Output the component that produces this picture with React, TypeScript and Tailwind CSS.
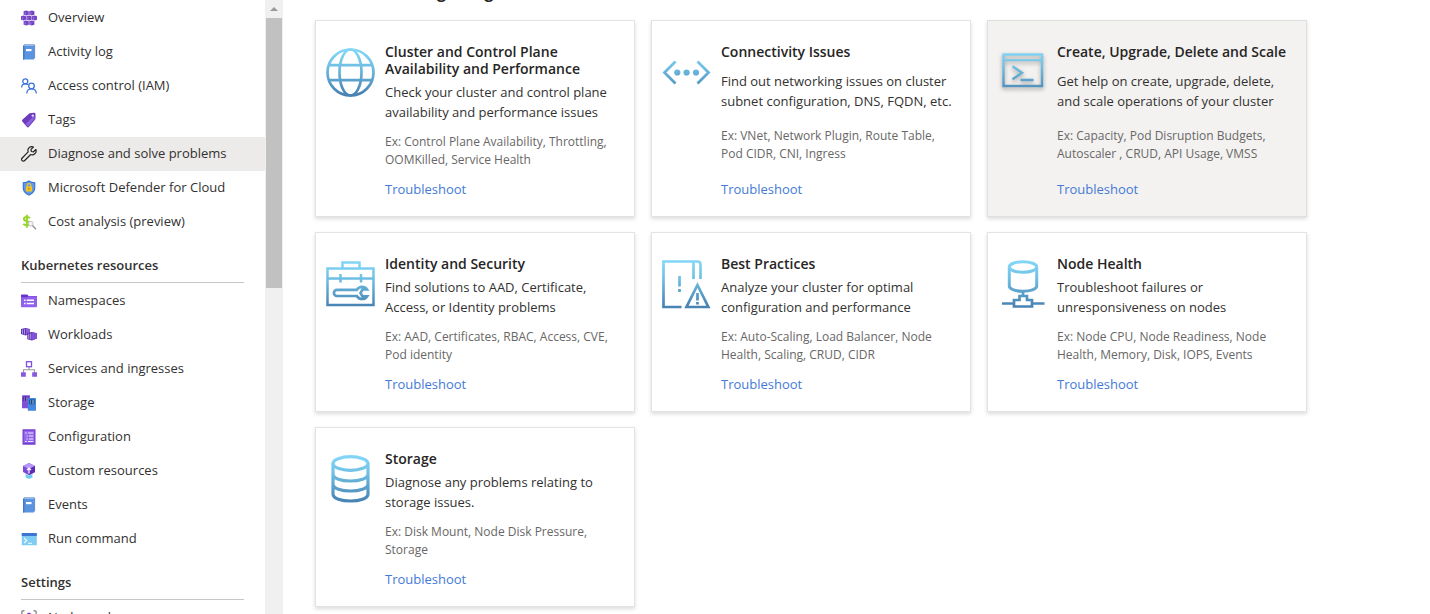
import type { ReactNode } from "react";

type NavItem = { label: string; icon: ReactNode; active?: boolean };
type CardData = { title: string; body: string; examples: string; icon: ReactNode; highlighted?: boolean };

function SmallIcon({ children }: { children: ReactNode }) {
  return (
    <svg aria-hidden="true" viewBox="0 0 16 16" className="size-4 shrink-0" fill="none">
      {children}
    </svg>
  );
}

function LargeIcon({ id, shadow, children }: { id: string; shadow?: boolean; children: ReactNode }) {
  return (
    <svg
      aria-hidden="true"
      viewBox="0 0 50 50"
      className={shadow ? "size-[50px] shrink-0 drop-shadow-[0_2px_2px_rgba(0,0,0,0.35)]" : "size-[50px] shrink-0"}
      fill="none"
      stroke={`url(#${id})`}
      strokeWidth="2.7"
    >
      <defs>
        <linearGradient id={id} gradientUnits="userSpaceOnUse" x1="0" y1="3" x2="0" y2="46">
          <stop offset="0" stopColor="#82d5f7" />
          <stop offset="0.35" stopColor="#6fc0e4" />
          <stop offset="1" stopColor="#4883b3" />
        </linearGradient>
      </defs>
      {children}
    </svg>
  );
}

function BookIcon() {
  return (
    <SmallIcon>
      <path d="M3 .9h10.600v13.600" stroke="#5b87c9" strokeWidth="1" />
      <path d="M2 2.200 3 1h10v1z" fill="#cfe0f7" />
      <rect x="2" y="1.500" width="11" height="14" fill="#5a93e0" />
      <path d="M2 1.500h1.400v14H2z" fill="#4479c6" />
      <rect x="5" y="5" width="5.500" height="2.200" fill="#fff" />
    </SmallIcon>
  );
}

const clusterIcon = (
  <SmallIcon>
    <g fill="#7444c4">
      <path d="m2.600 1.300 2.600-.8 2.600.8v3.400l-2.600.9-2.600-.9z" />
      <path d="m8.200 1.300 2.600-.8 2.600.8v3.400l-2.600.9-2.600-.9z" />
      <path d="M0 6.300l2.500-.8 2.500.8v3.400l-2.500.9L0 9.700z" />
      <path d="m5.400 6.300 2.600-.8 2.600.8v3.400l-2.600.9-2.600-.9z" />
      <path d="m11 6.300 2.500-.8 2.500.8v3.400l-2.500.9-2.500-.9z" />
      <path d="m2.600 11.300 2.600-.8 2.600.8v3.400l-2.600.9-2.600-.9z" />
      <path d="m8.200 11.300 2.600-.8 2.600.8v3.400l-2.600.9-2.600-.9z" />
    </g>
    <path d="M4.200 2.200v2.600M9.800 2.200v2.600M1.600 7.200v2.600M7 7.200v2.600M12.600 7.200v2.600M4.200 12.200v2.600M9.800 12.200v2.600" stroke="#9f78e2" strokeWidth="1" />
  </SmallIcon>
);

const peopleIcon = (
  <SmallIcon>
    <g stroke="#3f74dc" strokeWidth="1.300">
      <circle cx="4.300" cy="3.300" r="2.500" />
      <path d="M.7 9.500C.7 7 2.200 5.900 4.300 5.900c1.200 0 2.100.4 2.700 1" />
      <circle cx="10.500" cy="8" r="2.800" />
      <path d="M5.800 15.500c0-3 1.900-4.700 4.700-4.700s4.800 1.700 4.800 4.700" />
    </g>
  </SmallIcon>
);

const tagIcon = (
  <SmallIcon>
    <path d="M8.500 1.300 13 .8c1 0 1.500.5 1.500 1.500v4.200c0 .7-.2 1.100-.7 1.600l-6 6.900c-.6.600-1.200.600-1.800 0L1.300 9.500c-.500-.6-.5-1.100 0-1.700z" fill="#6d3cbd" />
    <path d="m13.500 3.500v3.500L7 14.500 4.500 12z" fill="#8c62dc" />
    <circle cx="11.800" cy="3.600" r="1.200" fill="#e6dafa" />
  </SmallIcon>
);

const wrenchIcon = (
  <SmallIcon>
    <path
      d="M14.900 3.500 12.500 5.800 10.300 5.500 10 3.400 12.400 1C10.700.3 8.900.700 7.900 1.900 6.900 3 6.700 4.500 7.200 5.900L1.200 12c-.8.800-.8 1.900-.1 2.600s1.900.7 2.600-.1l6-6c1.400.5 3 .2 4.100-.8 1.200-1.100 1.600-2.700 1.100-4.200z"
      stroke="#262524"
      strokeWidth="1.200"
      strokeLinejoin="round"
    />
  </SmallIcon>
);

const shieldIcon = (
  <SmallIcon>
    <path d="M8 .2c1.800 1.300 3.700 1.900 6.300 2v5.600c0 4-2.600 6.300-6.300 8-3.700-1.700-6.300-4-6.300-8V2.200C4.300 2.100 6.200 1.500 8 .2z" fill="#3d73d0" />
    <path d="M8 1.500c1.600 1 3.200 1.500 5.200 1.700v4.600c0 3.300-2.100 5.200-5.200 6.700-3.100-1.500-5.200-3.400-5.200-6.700V3.200C4.800 3 6.400 2.500 8 1.500z" fill="#619ae8" />
    <path d="M6.200 7V5.400C6.200 3 9.800 3 9.800 5.400V7" stroke="#f2c51e" strokeWidth="1.200" />
    <rect x="4.900" y="6.600" width="6.200" height="4.800" rx=".5" fill="#f2c51e" />
    <circle cx="8" cy="8.800" r=".8" fill="#a86c12" />
  </SmallIcon>
);

const costIcon = (
  <SmallIcon>
    <path d="M9 4.300C8.300 3.300 7.200 3 5.800 3 4 3 2.900 3.700 2.900 4.900c0 3 6.100 1.400 6.100 4.400 0 1.300-1.300 2-3 2-1.700 0-3-.5-3.700-1.600M5.900.8v12.900" stroke="#97d52c" strokeWidth="2" />
    <circle cx="9.700" cy="9.700" r="2.400" fill="#f3f3f3" stroke="#bcbcbc" strokeWidth=".9" />
    <path d="m11.500 11.500 3.500 3.700" stroke="#8e8e8e" strokeWidth="1.300" />
  </SmallIcon>
);

const namespaceIcon = (
  <SmallIcon>
    <path d="M0 2.300c0-.5.300-.8.800-.8h5.500L7.500 3H16v2H0z" fill="#6933c9" />
    <path d="M0 4.200h6.500l1-1H16v10.300c0 .5-.3.800-.8.800H.8c-.5 0-.8-.3-.8-.8z" fill="#9260ee" />
    <path d="M3 7.200h1.500M5.700 7.200H13M3 10.500h1.500M5.700 10.500H13" stroke="#fff" strokeWidth="1.600" />
  </SmallIcon>
);

const workloadIcon = (
  <SmallIcon>
    <path d="m0 2 4.500-1L9 2v5l-4.500 1.500L0 7z" fill="#5c36ac" />
    <path d="M1.500 2.500v4.300M3.500 2.200v5.200" stroke="#c4a9f5" strokeWidth=".8" />
    <path d="m5 1.500 4 .8v4.200L5 8z" fill="#8a5bdd" />
    <path d="m6.300 6 4.700-1 5 1.200v5.300L11 13.500l-4.700-1.200z" fill="#5529a4" />
    <path d="M11 5.200 16 6.500v5L11 13.300z" fill="#8250da" />
    <path d="M7.800 6.700v5.200M9.800 6.400v6" stroke="#cfb9f8" strokeWidth=".9" />
  </SmallIcon>
);

const servicesIcon = (
  <SmallIcon>
    <path d="M8 6v3M2.500 11.500V8.700h11v2.800" stroke="#9a9a9a" strokeWidth="1.100" />
    <rect x="5.500" y=".7" width="5" height="5" fill="#fff" stroke="#8250df" strokeWidth="1.300" />
    <path d="M0 11.300h4.800v4.500H0zM11.200 11.300H16v4.500h-4.800z" fill="#8658df" />
  </SmallIcon>
);

const storageIcon = (
  <SmallIcon>
    <rect x="1" y=".2" width="8" height="13" rx=".5" fill="#8050d7" />
    <rect x="2.300" y="1.500" width="5.400" height="4.500" fill="#4a2796" />
    <path d="M3 3h1M5 3h2.300M3 5h1M5 5h2.300" stroke="#cdb6fa" strokeWidth=".8" />
    <rect x="6.800" y="3" width="8.200" height="12.800" rx=".5" fill="#4387df" />
    <rect x="8.200" y="4.500" width="5.500" height="4.800" fill="#1d4a85" />
    <path d="M9 6h1M11 6h2.200M9 8h1M11 8h2.200" stroke="#b7e3fc" strokeWidth=".8" />
  </SmallIcon>
);

const configurationIcon = (
  <SmallIcon>
    <rect x="1.500" y=".2" width="13" height="15.600" rx=".5" fill="#7440cf" />
    <rect x="2.700" y="1.800" width="10.600" height="12" fill="#9568eb" />
    <path d="M4 4h1.700M7 4h5.300M5.500 7h1.300M8 7h4.300M5.500 10h1.300M8 10h4.300M4 12.500h1.700M7 12.500h5.300" stroke="#eee6ff" strokeWidth="1.200" />
  </SmallIcon>
);

const customIcon = (
  <SmallIcon>
    <path d="m8 0 6 3v6l-6 3.200L2 9V3z" fill="#7c48d8" />
    <path d="m8 0 6 3-6 3.100L2 3z" fill="#b797f7" />
    <path d="M8 6.100 14 3v6l-6 3.200z" fill="#5d2bb5" />
    <path d="M8 10.500V5.500M6 7l2-2 2 2" stroke="#fff" strokeWidth="1.200" />
    <path d="M4.600 11 8 12.500l3.400-1.500v3.500L8 16l-3.400-1.500z" fill="#71cbed" />
  </SmallIcon>
);

const commandIcon = (
  <SmallIcon>
    <rect x=".8" y="2" width="15" height="12.300" rx=".4" fill="#7fcdf2" />
    <path d="M.8 2h15v3H.8z" fill="#3d76d2" />
    <path d="m3 7 2.800 2.500L3 12M7 12.300h4" stroke="#f5fcff" strokeWidth="1.100" />
  </SmallIcon>
);

const nodePoolIcon = (
  <SmallIcon>
    <path d="M3.500.7H2.300Q.8.700.8 2.300v11.400q0 1.600 1.500 1.600h1.200M12.500.7h1.200q1.500 0 1.500 1.600v11.400q0 1.600-1.500 1.600h-1.200" stroke="#8f8f8f" strokeWidth="1.400" />
    <path d="m8 2.500 3.500 2v6l-3.500 2-2-2v-7z" fill="#743fca" />
  </SmallIcon>
);

const primaryNav: NavItem[] = [
  { label: "Overview", icon: clusterIcon },
  { label: "Activity log", icon: <BookIcon /> },
  { label: "Access control (IAM)", icon: peopleIcon },
  { label: "Tags", icon: tagIcon },
  { label: "Diagnose and solve problems", icon: wrenchIcon, active: true },
  { label: "Microsoft Defender for Cloud", icon: shieldIcon },
  { label: "Cost analysis (preview)", icon: costIcon },
];

const resourceNav: NavItem[] = [
  { label: "Namespaces", icon: namespaceIcon },
  { label: "Workloads", icon: workloadIcon },
  { label: "Services and ingresses", icon: servicesIcon },
  { label: "Storage", icon: storageIcon },
  { label: "Configuration", icon: configurationIcon },
  { label: "Custom resources", icon: customIcon },
  { label: "Events", icon: <BookIcon /> },
  { label: "Run command", icon: commandIcon },
];

const settingsNav: NavItem[] = [{ label: "Node pools", icon: nodePoolIcon }];

const cards: CardData[] = [
  {
    title: "Cluster and Control Plane\nAvailability and Performance",
    body: "Check your cluster and control plane\navailability and performance issues",
    examples: "Ex: Control Plane Availability, Throttling,\nOOMKilled, Service Health",
    icon: (
      <LargeIcon id="globe">
        <circle cx="24.500" cy="24.500" r="23" />
        <ellipse cx="24.500" cy="24.500" rx="11" ry="23" />
        <path d="M3 17.200h43M3 32.200h43" />
      </LargeIcon>
    ),
  },
  {
    title: "Connectivity Issues",
    body: "Find out networking issues on cluster\nsubnet configuration, DNS, FQDN, etc.",
    examples: "Ex: VNet, Network Plugin, Route Table,\nPod CIDR, CNI, Ingress",
    icon: (
      <LargeIcon id="link">
        <path d="M13.500 13.500 2.500 24.500l11 11M35.500 13.500l11 11-11 11" strokeWidth="2.800" />
        <g fill="url(#link)" stroke="none">
          <circle cx="15.300" cy="24.500" r="3.100" />
          <circle cx="24.600" cy="24.500" r="3.100" />
          <circle cx="34" cy="24.500" r="3.100" />
        </g>
      </LargeIcon>
    ),
  },
  {
    title: "Create, Upgrade, Delete and Scale",
    body: "Get help on create, upgrade, delete,\nand scale operations of your cluster",
    examples: "Ex: Capacity, Pod Disruption Budgets,\nAutoscaler , CRUD, API Usage, VMSS",
    highlighted: true,
    icon: (
      <LargeIcon id="terminal" shadow>
        <rect x="5.500" y="6.500" width="38.500" height="31.500" strokeWidth="2.400" />
        <path d="M5.500 12.300H44" strokeWidth="2" />
        <path d="m14.500 18.300 9.500 6.500-9.500 6.500M22.500 32h13" strokeWidth="2.400" />
      </LargeIcon>
    ),
  },
  {
    title: "Identity and Security",
    body: "Find solutions to AAD, Certificate,\nAccess, or Identity problems",
    examples: "Ex: AAD, Certificates, RBAC, Access, CVE,\nPod identity",
    icon: (
      <LargeIcon id="toolbox">
        <path d="M1.500 8.500h46V45h-46zM16.500 8.500v-6h17v6M1.500 18.500h46M14.500 14v8.500M35 14v8.500" strokeWidth="2.500" />
        <path d="M41 29.500c-1.200-1.700-3-2.700-5-2.700-2.300 0-4 1.200-5.200 3H11a3 3 0 0 0 0 6.200h19.800c1.200 1.900 2.900 3 5.200 3 2 0 3.800-.9 5-2.600h-4.500l-2-3.400 2-3.500z" />
      </LargeIcon>
    ),
  },
  {
    title: "Best Practices",
    body: "Analyze your cluster for optimal\nconfiguration and performance",
    examples: "Ex: Auto-Scaling, Load Balancer, Node\nHealth, Scaling, CRUD, CIDR",
    icon: (
      <LargeIcon id="book">
        <path d="M19.500 47h-18V1.500h34q3 0 3 3v14.500M31.500 2v17M17.500 16v10.500M17.500 29v3" />
        <path d="m35.500 25 10.800 22H24.500zM35.500 33v7.500M35.500 42v2.500" />
      </LargeIcon>
    ),
  },
  {
    title: "Node Health",
    body: "Troubleshoot failures or\nunresponsiveness on nodes",
    examples: "Ex: Node CPU, Node Readiness, Node\nHealth, Memory, Disk, IOPS, Events",
    icon: (
      <LargeIcon id="node">
        <g strokeWidth="3">
          <ellipse cx="25" cy="7" rx="13.700" ry="5.300" />
          <path d="M11.300 7V26c0 7 27.400 7 27.400 0V7" />
          <path d="M25 31.500V36M4 43.500h11.500M35 43.500h11.500M21.500 40v-4h7.500v4h5v6.500H16V40z" strokeWidth="2.700" />
        </g>
      </LargeIcon>
    ),
  },
  {
    title: "Storage",
    body: "Diagnose any problems relating to\nstorage issues.",
    examples: "Ex: Disk Mount, Node Disk Pressure,\nStorage",
    icon: (
      <LargeIcon id="disks">
        <g strokeWidth="3.200">
          <ellipse cx="24.500" cy="8.500" rx="17.500" ry="6.800" />
          <path d="M7 8.500v30.500c0 9.300 35 9.300 35 0V8.500M7 19c0 9.300 35 9.300 35 0M7 29c0 9.300 35 9.300 35 0" />
        </g>
      </LargeIcon>
    ),
  },
];

function NavList({ items }: { items: NavItem[] }) {
  return (
    <ul>
      {items.map((item) => (
        <li key={item.label}>
          <a
            href="#"
            aria-current={item.active ? "page" : undefined}
            className={
              item.active
                ? "flex h-[34px] items-center gap-[11px] bg-[#edebe9] pl-[21px]"
                : "flex h-[34px] items-center gap-[11px] pl-[21px]"
            }
          >
            {item.icon}
            <span className="whitespace-nowrap">{item.label}</span>
          </a>
        </li>
      ))}
    </ul>
  );
}

function NavHeading({ children }: { children: ReactNode }) {
  return (
    <h2 className="mr-[21px] mb-px ml-[21px] border-b border-[#c8c6c4] pt-4 pb-[7px] leading-5 font-semibold">{children}</h2>
  );
}

function Card({ card }: { card: CardData }) {
  return (
    <article
      className={
        card.highlighted
          ? "flex gap-[9px] border border-[#dfdfde] bg-[#f3f2f1] pt-[22px] pr-2 pb-[17px] pl-[10px] shadow-[0_2px_4px_rgba(0,0,0,0.14)]"
          : "flex gap-[9px] border border-[#e3e3e3] bg-white pt-[22px] pr-2 pb-[17px] pl-[10px] shadow-[0_2px_4px_rgba(0,0,0,0.14)]"
      }
    >
      <div className="pt-[5px]">{card.icon}</div>
      <div className="flex flex-col justify-between whitespace-pre-line">
        <h3 className="text-sm leading-[17px] font-semibold text-[#262524]">{card.title}</h3>
        <p className="mt-[5px] text-[13px] leading-5">{card.body}</p>
        <p className="mt-[11px] text-xs leading-[18px] text-[#686766]">{card.examples}</p>
        <a href="#" className="mt-[10px] self-start text-[13px] leading-5 text-[#447ad8]">
          Troubleshoot
        </a>
      </div>
    </article>
  );
}

export default function App() {
  return (
    <div className="flex h-screen overflow-hidden bg-white font-['Open_Sans',sans-serif] text-[13px] text-[#323130]">
      <nav aria-label="Resource menu" className="w-[265px] shrink-0 overflow-hidden pt-px">
        <NavList items={primaryNav} />
        <NavHeading>Kubernetes resources</NavHeading>
        <NavList items={resourceNav} />
        <NavHeading>Settings</NavHeading>
        <NavList items={settingsNav} />
      </nav>
      <div aria-hidden="true" className="flex w-[18px] shrink-0 flex-col bg-[#f0f0f0] px-px">
        <div className="flex h-[18px] items-center justify-center">
          <svg viewBox="0 0 8 4" className="h-1 w-2">
            <path d="M0 4 4 0l4 4z" fill="#9a9a9a" />
          </svg>
        </div>
        <div className="h-[270px] bg-[#c1c1c1]" />
      </div>
      <main className="min-w-0 grow overflow-hidden pr-4 pl-8">
        <h1 className="-mt-5 mb-4 text-base leading-6 font-bold text-[#262524]">Troubleshooting categories</h1>
        <div className="grid grid-cols-[repeat(auto-fill,320px)] gap-x-4 gap-y-[15px]">
          {cards.map((card) => (
            <Card key={card.title} card={card} />
          ))}
        </div>
      </main>
    </div>
  );
}
